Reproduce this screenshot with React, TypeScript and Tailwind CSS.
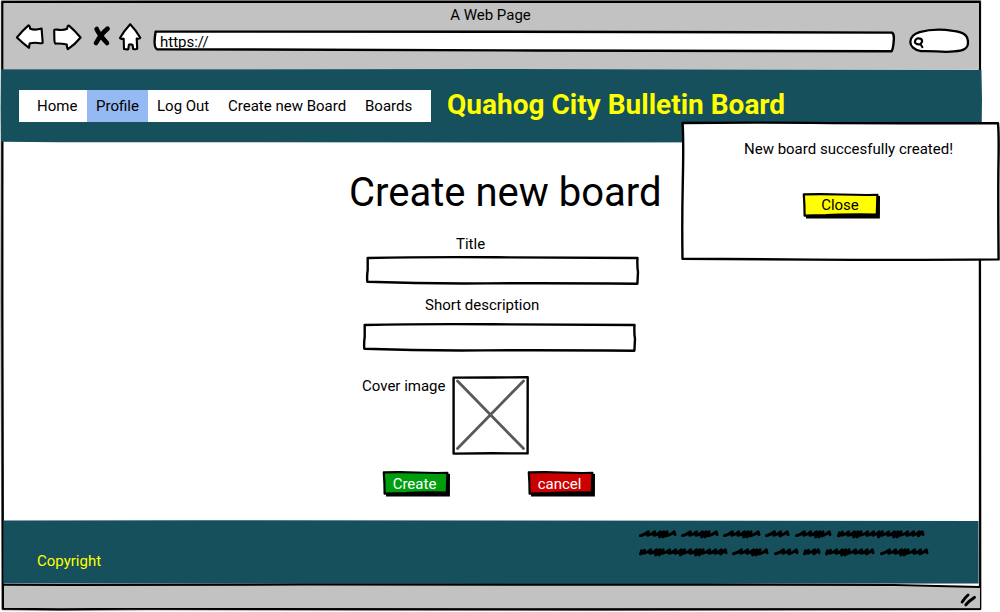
import type { ReactNode } from "react";

type SketchProps = {
  width: number;
  height: number;
  children: ReactNode;
};

function Sketch({ width, height, children }: SketchProps) {
  return (
    <svg
      className="pointer-events-none absolute top-0 left-0 overflow-visible"
      width={width}
      height={height}
      viewBox={`0 0 ${width} ${height}`}
      fill="none"
      stroke="#000"
      strokeWidth="2.4"
      strokeLinecap="round"
      strokeLinejoin="round"
      aria-hidden="true"
    >
      {children}
    </svg>
  );
}

function WindowFrame() {
  return (
    <Sketch width={982} height={612}>
      <path
        d="M2 1.4L160 1.2L500 1.2L980 1.2L979.8 200L980 400L980 609L700 609.3L400 609.5L150 609L60 609.8L2.6 609L2 420L1.6 300L2 100Z"
        stroke="#777"
        strokeWidth="2.4"
      />
      <path d="M2.4 2.1L500 2L979.9 2L980 300L980.2 609L600 609.4L130 608.8L60 609.2L3 608.8L2.4 300Z" strokeWidth="2.1" />
    </Sketch>
  );
}

function NavIcons() {
  return (
    <svg
      width="128"
      height="30"
      viewBox="15 22 128 30"
      fill="#fff"
      stroke="#000"
      strokeWidth="2.1"
      strokeLinecap="round"
      strokeLinejoin="round"
      aria-label="Browser controls"
    >
      <path d="M16.9 37.5Q22 31 28.5 25.4Q29.8 25.6 30.2 28.8Q35 30.6 41.6 28.6Q42 34 42.7 42.6Q42.6 43.6 40 43.2Q34 42 29.6 43.6L29 47.8Q23 43.4 16.9 37.5Z" />
      <path d="M54.2 30.2Q54.6 29.3 57 29.6Q63 30.8 67.2 28.8Q67 25.6 69 25.6Q74.6 30.4 80.6 37.5Q75 44.5 67.9 49.2Q67 48.6 66.8 44.6Q62 43.4 55.6 43.6Q54.6 43.4 54.4 40Z" />
      <path d="M96.6 29Q99 34.5 107 43M107.6 28.6Q101 34 96 43" strokeWidth="4.6" />
      <path d="M130.2 24.2Q136 30.2 140.3 37.8Q140 39 136.7 38.6L137.2 48.6Q136.6 49.6 133.2 49L132.6 45Q130.8 43.8 128.9 44.8L128.3 49.2Q126.6 49.6 124 49L123.7 38.9Q120.2 39 120 38Q123.5 31.5 130.2 24.2Z" />
    </svg>
  );
}

function AddressBar() {
  return (
    <div className="relative ml-[11px] flex h-[22px] w-[741px] items-center pl-[6px]">
      <Sketch width={741} height={22}>
        <path
          d="M1.6 1.6Q160 1.2 340 1.7T738 2.6Q740.3 4 739.8 10Q739.2 19 737.6 21.2Q560 21.5 380 20.5T3 19.2Q-1 17 1.6 1.6Z"
          fill="#fff"
        />
      </Sketch>
      <span className="relative mt-[2px] text-[15px] leading-[20px]">https://</span>
    </div>
  );
}

function SearchPill() {
  return (
    <div className="relative ml-[14px] h-[24px] w-[60px]">
      <Sketch width={60} height={24}>
        <path
          d="M10.5 3.2C20 .5 34 .3 44 1.8C54 3 58.4 5.6 58.9 12C59.8 20 54 22 45 22.3C35 23.9 24 21.4 12 22.2C5 21 1.3 17 1.3 13C1.3 8 5 5 10.5 3.2Z"
          fill="#fff"
          strokeWidth="2.3"
        />
        <path d="M12.4 10.2Q10.4 8.9 8 9.6Q5.6 10.8 6 13.6Q8.2 16.3 11.4 15Q14.2 12.6 12.4 10.2M11.6 15.2L13.4 18.2" strokeWidth="2.1" />
      </Sketch>
    </div>
  );
}

function BrowserBar() {
  return (
    <div className="relative mx-[3.5px] mt-[3px] h-[66px] bg-[#c2c2c2]">
      <p className="h-[22px] pt-[2px] pr-px text-center text-[15px] leading-[20px]">A Web Page</p>
      <div className="flex items-start pl-[11.5px]">
        <div className="-mt-[3px]">
          <NavIcons />
        </div>
        <div className="mt-[5px]">
          <AddressBar />
        </div>
        <div className="mt-[4px]">
          <SearchPill />
        </div>
      </div>
    </div>
  );
}

function Header() {
  return (
    <header className="relative flex h-[73px] w-full items-start pl-[19px]">
      <Sketch width={982} height={73}>
        <path
          d="M1 .3L500 .1L981.4 .8L982 30L981.5 73L600 73.6L60 73.2L1 72.8L.7 40Z"
          fill="#15505c"
          stroke="none"
        />
      </Sketch>
      <nav className="relative mt-[21px] flex h-[32px] w-[412px] bg-white pl-[9px] text-[15px] leading-[32px]">
        <a className="w-[59px] pl-[9px]">Home</a>
        <a className="w-[61px] bg-[#95b9f2] pl-[9px]">Profile</a>
        <a className="w-[71px] pl-[9px]">Log Out</a>
        <a className="w-[137px] pl-[9px] whitespace-nowrap">Create new Board</a>
        <a className="pl-[9px]">Boards</a>
      </nav>
      <h1 className="relative mt-[19px] ml-[16px] text-[28px] leading-[34px] font-bold whitespace-nowrap text-[#ffff00]">
        Quahog City Bulletin Board
      </h1>
    </header>
  );
}

function SketchInput() {
  return (
    <div className="relative h-[29px] w-[274px]">
      <Sketch width={274} height={29}>
        <path
          d="M1.7 2Q60 .8 130 1.3T271.5 2Q271 10 272 16L271.4 27.7Q180 26.9 120 27.4T1.3 25.7Q.8 20 1.7 14Z"
          fill="#fff"
        />
      </Sketch>
    </div>
  );
}

type SketchButtonProps = {
  label: string;
  kind: "create" | "cancel" | "close";
};

const fills = { create: "#009e0f", cancel: "#cc0000", close: "#ffff00" };

function SketchButton({ label, kind }: SketchButtonProps) {
  const w = kind === "close" ? 78 : 68;
  return (
    <button
      type="button"
      className={
        kind === "close"
          ? "relative h-[26px] w-[78px] pr-[2px] pb-[2px] text-[15px] leading-[24px] text-black"
          : "relative h-[26px] w-[68px] pr-[3px] text-[15px] leading-[26px] text-white"
      }
    >
      <Sketch width={w} height={26}>
        <path d={`M4 5L${w - 5} 2.6L${w} 3L${w - 0.1} 25.6L4 25.6Z`} fill="#000" stroke="none" />
        <path
          d={`M1.8 1.4Q20 .8 ${w / 2} 1.5T${w - 2.6} 1.9L${w - 3.2} 21.5Q${w / 2} 21.2 24 22L2.6 22.6Q2.6 12 1.8 1.4Z`}
          fill={fills[kind]}
          strokeWidth="2.2"
        />
      </Sketch>
      <span className="relative">{label}</span>
    </button>
  );
}

function ImagePlaceholder() {
  return (
    <div className="relative h-[79px] w-[77px]" role="img" aria-label="Cover image">
      <Sketch width={77} height={79}>
        <path d="M5.5 5L71.5 72.5M71.5 5L5.5 72.5" stroke="#595959" strokeWidth="2.8" />
        <path d="M1.6 1.6L40 1.5L75.7 1.2L75.6 77.4L40 77.3L1.6 77.6Z" />
      </Sketch>
    </div>
  );
}

function BoardForm() {
  return (
    <main className="relative flex h-[378px] flex-col pl-[349px] text-[15px] leading-[20px]">
      <h2 className="mt-[26px] h-[48px] text-[40px] leading-[50px] whitespace-nowrap">Create new board</h2>
      <label className="mt-[18px] ml-[107px] h-[20px]">Title</label>
      <div className="mt-[2px] ml-[17px]">
        <SketchInput />
      </div>
      <label className="mt-[10px] ml-[76px] h-[20px]">Short description</label>
      <div className="mt-[8px] ml-[14px]">
        <SketchInput />
      </div>
      <div className="mt-[24px] ml-[13px] flex gap-[6px]">
        <span className="w-[84px] whitespace-nowrap">Cover image</span>
        <ImagePlaceholder />
      </div>
      <div className="mt-[16px] ml-[33px] flex gap-[77px]">
        <SketchButton label="Create" kind="create" />
        <SketchButton label="cancel" kind="cancel" />
      </div>
    </main>
  );
}

const scribbleRows = [
  [[640.5, 675], [682.5, 717], [724.5, 759], [766.5, 788], [796.5, 830], [838.5, 923]],
  [[640.5, 726], [733.5, 767], [775.5, 797], [804.5, 819], [826.5, 873], [881.5, 927]],
];

const strideCycle = [6.2, 5.8, 3.4, 3.2, 6.6, 6, 5.6, 3.2];

function scribble(from: number, to: number, y: number) {
  const pointed = (to - from > 20 && to - from < 40) || to > 926.5;
  let d = pointed
    ? `M${from} ${y + 1.8}Q${from + 4} ${y + 1} ${from + 8} ${y - 2}`
    : `M${from + 1} ${y - 1}L${from} ${y + 2}L${from + 4} ${y - 1.6}`;
  let x = from + (pointed ? 8 : 4);
  let i = 0;
  while (x < to - 8) {
    const stride = strideCycle[i % strideCycle.length];
    const dip = stride < 4 ? 3 : 1.4;
    d += `Q${x - 1.4} ${y + 0.4} ${x - 0.8} ${y + dip}Q${x + stride * 0.5} ${y + 0.8} ${x + stride} ${y - 2}`;
    x += stride;
    i += 1;
  }
  return `${d}Q${x - 1.4} ${y} ${x - 0.8} ${y + 2}Q${to - 3} ${y + 0.4} ${to - 0.8} ${y - 2}L${to} ${y + 0.8}`;
}

function Footer() {
  return (
    <footer className="relative ml-[3px] flex h-[64px] w-[976px] items-start justify-between pl-[34px]">
      <Sketch width={976} height={64}>
        <path d="M.5 .4L200 .2L975.5 .9L975.6 63.4L700 64L.3 63.6Z" fill="#15505c" stroke="none" />
      </Sketch>
      <p className="relative mt-[31px] text-[15px] leading-[20px] text-[#ffff00]">Copyright</p>
      <svg
        className="relative mt-[7px] mr-[48px]"
        width="292"
        height="32"
        viewBox="639 527 292 32"
        fill="none"
        stroke="#000"
        strokeWidth="3"
        strokeLinecap="round"
        strokeLinejoin="round"
        aria-hidden="true"
      >
        {scribbleRows.map((row, r) =>
          row.map(([from, to]) => <path key={`${r}-${from}`} d={scribble(from, to, r === 0 ? 533.8 : 551.9)} />),
        )}
      </svg>
    </footer>
  );
}

function StatusBar() {
  return (
    <div className="relative ml-[3.5px] h-[24px] w-[976px]">
      <Sketch width={976} height={24}>
        <path d="M0 .5L700 .5L976 3L976 24L0 24Z" fill="#c2c2c2" stroke="none" />
        <path d="M0 .7L60 .9L300 .6L740 .7L890 1.1L976 3" strokeWidth="2" />
        <path d="M958.2 18Q960.6 14 964 11M961.8 20.8Q964.2 17.6 970.4 13.4" strokeWidth="3" />
      </Sketch>
    </div>
  );
}

function Notification() {
  return (
    <div
      role="alertdialog"
      className="absolute top-[122px] left-[681px] flex h-[139px] w-[319px] flex-col items-center text-[15px] leading-[20px]"
    >
      <Sketch width={319} height={139}>
        <path
          d="M1.6 1Q70 .3 130 .9T317 1.2Q318 12 317.5 40T317.6 137.4Q230 138.2 130 137.6L1.5 136.8Q.9 100 1.8 60T1.6 1Z"
          fill="#fff"
        />
      </Sketch>
      <p className="relative mt-[17px] ml-[16px] whitespace-nowrap">New board succesfully created!</p>
      <div className="mt-[34px] ml-px">
        <SketchButton label="Close" kind="close" />
      </div>
    </div>
  );
}

export default function App() {
  return (
    <div className="relative h-[612px] w-[1000px] overflow-hidden bg-white font-['Roboto',sans-serif] text-black">
      <div className="relative flex h-[612px] w-[982px] flex-col">
        <WindowFrame />
        <BrowserBar />
        <Header />
        <BoardForm />
        <Footer />
        <StatusBar />
      </div>
      <Notification />
    </div>
  );
}
